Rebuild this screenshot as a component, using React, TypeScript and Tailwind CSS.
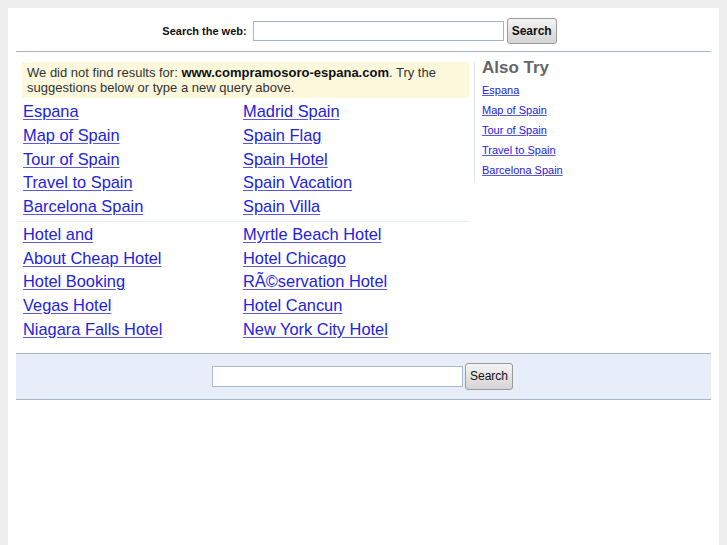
const mainLinks = [
  ["Espana", "Madrid Spain"],
  ["Map of Spain", "Spain Flag"],
  ["Tour of Spain", "Spain Hotel"],
  ["Travel to Spain", "Spain Vacation"],
  ["Barcelona Spain", "Spain Villa"],
]

const hotelLinks = [
  ["Hotel and", "Myrtle Beach Hotel"],
  ["About Cheap Hotel", "Hotel Chicago"],
  ["Hotel Booking", "RÃ©servation Hotel"],
  ["Vegas Hotel", "Hotel Cancun"],
  ["Niagara Falls Hotel", "New York City Hotel"],
]

const alsoTry = ["Espana", "Map of Spain", "Tour of Spain", "Travel to Spain", "Barcelona Spain"]

function LinkGrid({ rows }: { rows: string[][] }) {
  return (
    <div className="grid grid-cols-[220px_1fr] pl-[1px]">
      {rows.flat().map((label, i) => (
        <a key={i} href="#" className="text-[16.4px] leading-[23.75px] text-[#2121e0] underline decoration-[#5a5ae6] underline-offset-2">
          {label}
        </a>
      ))}
    </div>
  )
}

export default function App() {
  return (
    <div className="min-h-screen bg-[#eeeeee] px-2 pt-2 font-['Liberation_Sans',Arial,sans-serif]">
      <div className="min-h-[537px] bg-white px-2">
        {/* top search */}
        <div className="flex items-center justify-center border-b border-[#a5b6c9] pt-[10px] pb-[7px] pr-[8px]">
          <span className="mr-[6px] text-[11px] font-bold text-[#111]">Search the web:</span>
          <input className="h-[20px] w-[251px] border border-[#9fb4cf] bg-white" />
          <button className="ml-[3px] h-[26px] w-[50px] rounded-[3px] border border-[#9a9a9a] bg-gradient-to-b from-[#f4f4f4] to-[#d4d4d4] text-[12px] font-bold text-[#111]">
            Search
          </button>
        </div>

        {/* results */}
        <div className="flex pt-[10px]">
          <div className="ml-[6px] w-[447px]">
            <div className="bg-[#fcf8dc] px-[5px] py-[3px] text-[13px] leading-[15px] text-[#333]">
              We did not find results for: <b className="text-[#111]">www.compramosoro-espana.com</b>. Try the suggestions below or type a new query above.
            </div>
            <div className="mt-[2px]">
              <LinkGrid rows={mainLinks} />
            </div>
            <div className="mt-[2px] mb-[1px] ml-[-4px] border-t border-[#e6ecf8]" />
            <div className="mt-[1px]">
              <LinkGrid rows={hotelLinks} />
            </div>
          </div>
          <div className="ml-[5px] flex-1">
            <div className="h-[121px] border-l border-[#dde3ef] pl-[7px]">
              <div className="text-[17px] font-bold leading-[12px] text-[#666]">Also Try</div>
              <div className="mt-[6px] flex flex-col">
                {alsoTry.map((label) => (
                  <a key={label} href="#" className="text-[11px] leading-[20px] text-[#2121e0] underline decoration-[#5a5ae6]">
                    {label}
                  </a>
                ))}
              </div>
            </div>
          </div>
        </div>

        {/* bottom search */}
        <div className="mt-[11px] flex items-center justify-center border-y border-[#a5b6c9] bg-[#e8eef9] py-[9px] pr-[2px]">
          <input className="h-[21px] w-[251px] border border-[#a9bcd4] bg-white" />
          <button className="ml-[2px] h-[27px] w-[48px] rounded-[3px] border border-[#9a9a9a] bg-gradient-to-b from-[#f4f4f4] to-[#d4d4d4] text-[12px] text-[#111]">
            Search
          </button>
        </div>
      </div>
    </div>
  )
}
